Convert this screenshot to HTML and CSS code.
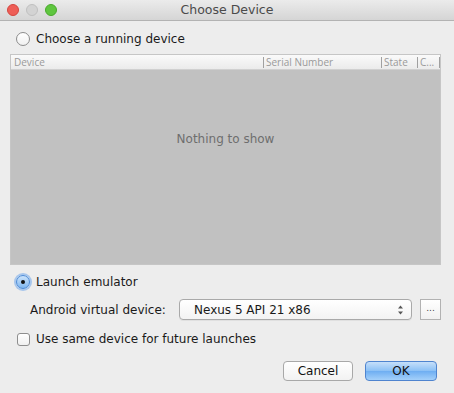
FILE: index.html
```html
<!DOCTYPE html>
<html>
<head>
<meta charset="utf-8">
<link rel="stylesheet" href="styles.css">
</head>
<body>
<div class="window">
  <div class="titlebar">
    <div class="lights">
      <span class="light red"></span>
      <span class="light gray"></span>
      <span class="light green"></span>
    </div>
    <div class="title">Choose Device</div>
  </div>
  <div class="content">
    <label class="option first">
      <span class="radio"></span>
      <span>Choose a running device</span>
    </label>
    <div class="table">
      <div class="thead">
        <span class="col c-device">Device</span>
        <span class="col sep c-serial">Serial Number</span>
        <span class="col sep c-state">State</span>
        <span class="col sep c-c">C...</span>
      </div>
      <div class="tbody">Nothing to show</div>
    </div>
    <label class="option launch">
      <span class="radio checked"><span class="dot"></span></span>
      <span>Launch emulator</span>
    </label>
    <div class="avd-row">
      <span class="avd-label">Android virtual device:</span>
      <div class="combo">
        <span>Nexus 5 API 21 x86</span>
        <svg class="arrows" width="7" height="10" viewBox="0 0 7 10"><path d="M3.5 0.5 L6 3.5 L1 3.5 Z M3.5 9.5 L6 6.5 L1 6.5 Z" fill="#555"/></svg>
      </div>
      <div class="more">...</div>
    </div>
    <label class="option check-row">
      <span class="checkbox"></span>
      <span>Use same device for future launches</span>
    </label>
    <div class="buttons">
      <button class="btn cancel">Cancel</button>
      <button class="btn ok">OK</button>
    </div>
  </div>
</div>
</body>
</html>
```
FILE: styles.css
```css
html, body {
  margin: 0;
  padding: 0;
}
body {
  width: 454px;
  height: 393px;
  overflow: hidden;
  background: #ececec;
  font-family: "DejaVu Sans", "Liberation Sans", sans-serif;
  font-size: 12px;
  color: #1a1a1a;
}
.window {
  width: 454px;
  height: 393px;
  background: #ededed;
  display: flex;
  flex-direction: column;
}
.titlebar {
  height: 21px;
  box-sizing: border-box;
  background: linear-gradient(#ebebeb, #d5d5d5);
  border-bottom: 1px solid #b3b3b3;
  display: flex;
  align-items: center;
  position: relative;
}
.lights {
  display: flex;
  gap: 7px;
  padding-left: 7px;
  position: relative;
  z-index: 1;
}
.light {
  width: 12px;
  height: 12px;
  border-radius: 50%;
  box-sizing: border-box;
}
.red { background: #ee5e57; border: 1px solid #d4463f; }
.gray { background: #d3d3d3; border: 1px solid #c0c0c0; }
.green { background: #5fc63f; border: 1px solid #49a92c; }
.title {
  position: absolute;
  left: 0;
  right: 0;
  text-align: center;
  font-size: 12.5px;
  color: #4a4a4a;
  top: 2px;
}
.content {
  padding: 0 13px 0 10px;
  display: flex;
  flex-direction: column;
}
.option {
  display: flex;
  align-items: center;
  gap: 6px;
  height: 16px;
}
.first {
  margin-top: 10px;
  padding-left: 6px;
}
.radio {
  width: 14px;
  height: 14px;
  box-sizing: border-box;
  border-radius: 50%;
  border: 1px solid #8c8c8c;
  background: linear-gradient(#ffffff, #f0f0f0);
  display: flex;
  align-items: center;
  justify-content: center;
}
.radio.checked {
  border: 1px solid #4a8ad8;
  background: linear-gradient(#cde4fb, #7fb6ef);
  box-shadow: 0 0 0 2px rgba(110, 165, 235, 0.55);
}
.dot {
  width: 4px;
  height: 4px;
  border-radius: 50%;
  background: #111;
}
.table {
  margin-top: 7px;
  height: 211px;
  width: 431px;
  box-sizing: border-box;
  border: 1px solid #c6c6c6;
  display: flex;
  flex-direction: column;
}
.thead {
  height: 14px;
  flex: none;
  background: linear-gradient(#fafafa, #ebebeb);
  border-bottom: 1px solid #d0d0d0;
  display: flex;
  font-family: "Open Sans", "DejaVu Sans", sans-serif;
  font-size: 10px;
  line-height: 14px;
  color: #9a9a9a;
}
.col {
  box-sizing: border-box;
  padding-left: 3px;
  white-space: nowrap;
  position: relative;
}
.sep {
  padding-left: 3px;
}
.sep::before {
  content: "";
  position: absolute;
  left: 0;
  top: 2px;
  height: 11px;
  border-left: 1px solid #a0a0a0;
}
.c-device { width: 252px; }
.c-serial { width: 118px; }
.c-state { width: 36px; }
.c-c { width: 23px; border-right: 1px solid #a0a0a0; height: 11px; margin-top: 2px; line-height: 11px; }
.c-c::before { top: 0; }
.tbody {
  flex: 1;
  background: #c1c1c1;
  display: flex;
  align-items: flex-start;
  justify-content: center;
  color: #6e6e6e;
  font-size: 12px;
  padding-top: 62px;
}
.launch {
  margin-top: 9px;
  padding-left: 6px;
}
.avd-row {
  margin-top: 9px;
  display: flex;
  align-items: center;
  height: 21px;
  padding-left: 20px;
}
.avd-label {
  width: 149px;
}
.combo {
  width: 233px;
  height: 21px;
  box-sizing: border-box;
  border: 1px solid #a9a9a9;
  border-radius: 4px;
  background: linear-gradient(#ffffff, #f3f3f3);
  display: flex;
  align-items: center;
  justify-content: space-between;
  padding: 0 7px 0 14px;
  box-shadow: 0 1px 0 rgba(0,0,0,0.05);
}
.more {
  margin-left: 8px;
  width: 21px;
  height: 21px;
  box-sizing: border-box;
  border: 1px solid #b2b2b2;
  background: linear-gradient(#ffffff, #f1f1f1);
  font-size: 9px;
  display: flex;
  align-items: center;
  justify-content: center;
  padding-bottom: 4px;
  color: #444;
}
.check-row {
  margin-top: 11px;
  padding-left: 7px;
}
.checkbox {
  width: 13px;
  height: 13px;
  box-sizing: border-box;
  border: 1px solid #8e8e8e;
  border-radius: 3px;
  background: linear-gradient(#ffffff, #f0f0f0);
}
.buttons {
  margin-top: 14px;
  display: flex;
  justify-content: flex-end;
  gap: 12px;
  padding-right: 4px;
}
.btn {
  height: 20px;
  box-sizing: border-box;
  font-family: "DejaVu Sans", "Liberation Sans", sans-serif;
  font-size: 12px;
  color: #111;
  border-radius: 4px;
  padding: 0;
  line-height: 18px;
}
.cancel {
  width: 70px;
  border: 1px solid #a8a8a8;
  background: linear-gradient(#ffffff, #f2f2f2);
}
.ok {
  width: 72px;
  border: 1px solid #4f84cf;
  background: linear-gradient(#c6dffa, #8ac0f5 50%, #6eaef2 51%, #a4d0fa);
}
```
